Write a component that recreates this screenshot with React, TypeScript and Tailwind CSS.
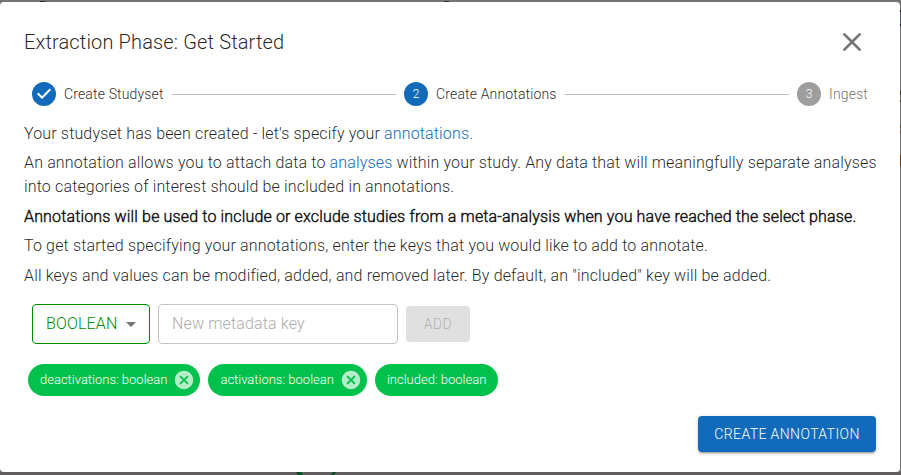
import type { ReactNode } from "react";

function Step({ icon, label, active }: { icon: ReactNode; label: string; active: boolean }) {
  return (
    <div className="flex items-center px-2 h-6 shrink-0">
      <div className="pr-2">
        <svg viewBox="0 0 24 24" className={active ? "size-6 fill-[#116bba]" : "size-6 fill-[#9e9e9e]"}>
          {icon}
        </svg>
      </div>
      <span className={active ? "text-sm leading-5 tracking-[0.15px] text-black/87" : "text-sm leading-5 tracking-[0.15px] text-black/60"}>{label}</span>
    </div>
  );
}

function StepNumber({ value }: { value: string }) {
  return (
    <>
      <circle cx="12" cy="12" r="12" />
      <text x="12" y="12" textAnchor="middle" dominantBaseline="central" className="fill-white text-xs">
        {value}
      </text>
    </>
  );
}

function Chip({ label, removable }: { label: string; removable?: boolean }) {
  return (
    <div className="flex h-8 items-center rounded-full bg-[#00c14b] text-[13px] text-white">
      <span className="px-3">{label}</span>
      {removable && (
        <svg viewBox="0 0 24 24" className="-ml-1.5 mr-[5px] size-[22px] fill-white/70">
          <path d="M12 2C6.47 2 2 6.47 2 12s4.47 10 10 10 10-4.47 10-10S17.53 2 12 2zm5 13.59L15.59 17 12 13.41 8.41 17 7 15.59 10.59 12 7 8.41 8.41 7 12 10.59 15.59 7 17 8.41 13.41 12 17 15.59z" />
        </svg>
      )}
    </div>
  );
}

/* Slivers of the dimmed page that show around the dialog. */
function Backdrop() {
  return (
    <svg viewBox="0 0 901 475" className="absolute inset-0 h-[475px] w-[901px]">
      <path d="M0 0h901v475H0z" fill="#757373" />
      <path d="M0 472h901v3H0z" fill="#5f5d5d" />
      <path d="M40 1h5v1h-5zM444 1h5v1h-5z" fill="#2c2a2a" />
      <path d="M900 10h1v2h-1zM900 24h1v2h-1z" fill="#0b1420" />
      <path d="M900 12h1v12h-1z" fill="#4e5a66" />
      <path d="M900 91h1v4h-1zM900 100h1v2h-1z" fill="#3a2e20" />
      <path d="M900 125h1v3h-1zM900 131h1v2h-1z" fill="#6f4a12" />
      <path d="M900 155h1v11h-1z" fill="#6b3300" />
      <path d="M296 472h5l2 3h-5zM333 472h3l-2 3h-3z" fill="#004d20" />
    </svg>
  );
}

export default function App() {
  return (
    <div className="relative h-[475px] w-[901px] overflow-hidden pt-0.5 font-['Roboto',sans-serif] font-light">
      <Backdrop />
      <div className="relative flex h-[470px] w-[900px] flex-col rounded bg-white px-6 text-black/87">
        <div className="flex h-20 items-center justify-between">
          <h2 className="text-xl leading-8 tracking-[0.15px]">Extraction Phase: Get Started</h2>
          <button aria-label="Close" className="mr-2">
            <svg viewBox="0 0 24 24" className="size-8 fill-black/54">
              <path d="M19 6.41 17.59 5 12 10.59 6.41 5 5 6.41 10.59 12 5 17.59 6.41 19 12 13.41 17.59 19 19 17.59 13.41 12z" />
            </svg>
          </button>
        </div>

        <div className="flex h-6 items-center">
          <Step
            active
            label="Create Studyset"
            icon={<path d="M12 0a12 12 0 1 0 0 24 12 12 0 0 0 0-24zm-2 17l-5-5 1.4-1.4 3.6 3.6 7.6-7.6L19 8l-9 9z" />}
          />
          <div className="h-px flex-1 bg-[#bdbdbd]" />
          <Step active label="Create Annotations" icon={<StepNumber value="2" />} />
          <div className="h-px flex-1 bg-[#bdbdbd]" />
          <Step active={false} label="Ingest" icon={<StepNumber value="3" />} />
        </div>

        <div className="flex h-[182px] flex-col gap-[5.5px] pt-[15.6px] text-base leading-6 tracking-[0.15px]">
          <p>Your studyset has been created - let's specify your <span className="text-[#116bba]">annotations.</span></p>
          <div className="whitespace-nowrap">
            <p>An annotation allows you to attach data to <span className="text-[#116bba]">analyses</span> within your study. Any data that will meaningfully separate analyses</p>
            <p>into categories of interest should be included in annotations.</p>
          </div>
          <p className="[-webkit-text-stroke:0.55px_rgba(0,0,0,0.8)]">Annotations will be used to include or exclude studies from a meta-analysis when you have reached the select phase.</p>
          <p>To get started specifying your annotations, enter the keys that you would like to add to annotate.</p>
          <p>All keys and values can be modified, added, and removed later. By default, an "included" key will be added.</p>
        </div>

        <div className="ml-2 mt-4 flex items-center gap-2">
          <button className="flex h-10 w-[118px] items-center rounded border border-[#008a00] pl-[13px] text-base tracking-[0.15px] text-[#008a00]">
            BOOLEAN
            <svg viewBox="0 0 24 24" className="ml-0.5 size-6 fill-black/54"><path d="M7 10l5 5 5-5z" /></svg>
          </button>
          <input placeholder="New metadata key" className="h-10 w-60 rounded border border-[#c4c4c4] px-[13px] pb-0.5 text-base tracking-[0.15px] placeholder:text-[#acacac]" />
          <button disabled className="h-9 w-16 rounded bg-[#e0e0e0] text-sm tracking-[0.4px] text-black/26">ADD</button>
        </div>

        <div className="ml-1 mt-5 flex gap-2">
          <Chip label="deactivations: boolean" removable />
          <Chip label="activations: boolean" removable />
          <Chip label="included: boolean" />
        </div>

        <button className="mt-5 h-9 w-[178px] shrink-0 self-end rounded bg-[#116bba] text-sm tracking-[0.4px] text-white shadow-[0_3px_1px_-2px_rgba(0,0,0,0.2),0_2px_2px_0_rgba(0,0,0,0.14),0_1px_5px_0_rgba(0,0,0,0.12)]">CREATE ANNOTATION</button>
      </div>
    </div>
  );
}
